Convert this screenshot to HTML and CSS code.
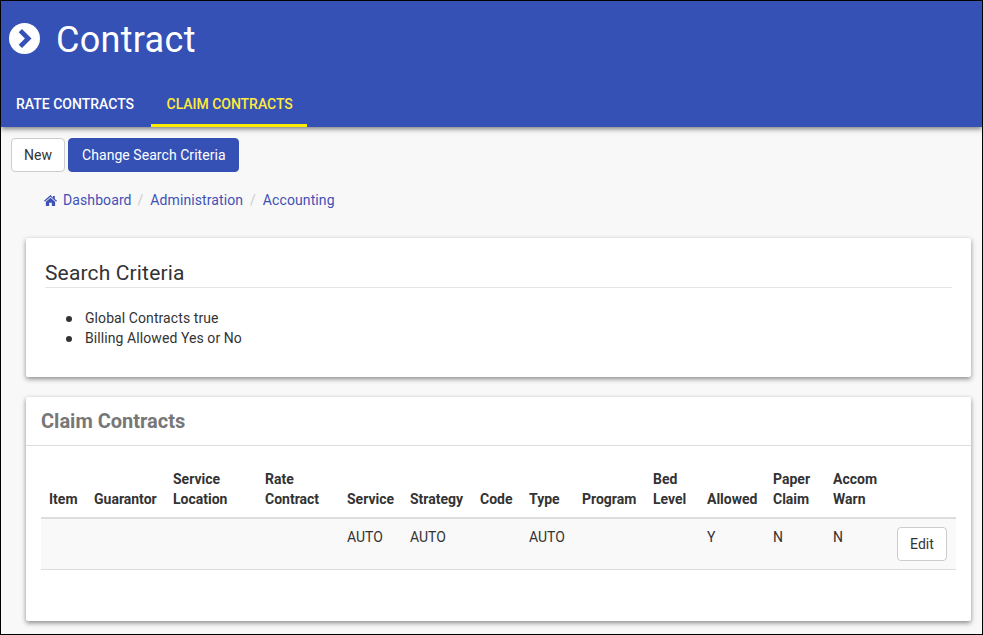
FILE: index.html
```html
<!DOCTYPE html>
<html lang="en">
<head>
<meta charset="utf-8">
<title>Contract</title>
<link rel="stylesheet" href="styles.css">
</head>
<body>
<div class="frame">
  <header class="header">
    <div class="title-row">
      <svg class="title-icon" viewBox="0 0 31 31" width="31" height="31" aria-hidden="true">
        <circle cx="15.500" cy="15.500" r="15.500" fill="#fff"/>
        <path d="M13 6 22.500 15.500 13 25 9.700 21.700l6.200-6.200-6.200-6.200z" fill="#3551b5"/>
      </svg>
      <h1 class="title">Contract</h1>
    </div>
    <nav class="tabs">
      <a class="tab">RATE CONTRACTS</a>
      <a class="tab tab-active">CLAIM CONTRACTS</a>
    </nav>
  </header>
  <main class="main">
    <div class="actions">
      <button class="btn btn-default">New</button>
      <button class="btn btn-primary">Change Search Criteria</button>
    </div>
    <ol class="breadcrumb">
      <li class="crumb">
        <svg class="home" viewBox="0 0 24 20" width="13" height="11" aria-hidden="true">
          <path d="M12 0 0 10.500l1.500 1.700L12 3l10.500 9.200 1.500-1.700-4-3.500V1.500h-3.500v3.300zM12 5 3.500 12.400V20h6v-6h5v6h6v-7.600z" fill="#3f51b5"/>
        </svg>
        <a>Dashboard</a>
      </li>
      <li class="crumb"><a>Administration</a></li>
      <li class="crumb"><a>Accounting</a></li>
    </ol>
    <section class="card card-search">
      <h2 class="search-title">Search Criteria</h2>
      <ul class="criteria">
        <li>Global Contracts true</li>
        <li>Billing Allowed Yes or No</li>
      </ul>
    </section>
    <section class="card card-table">
      <h3 class="panel-title">Claim Contracts</h3>
      <div class="panel-body">
        <table class="grid">
          <thead>
            <tr>
              <th>Item</th><th>Guarantor</th><th>Service<br>Location</th><th>Rate<br>Contract</th><th>Service</th><th>Strategy</th><th>Code</th><th>Type</th><th>Program</th><th>Bed<br>Level</th><th>Allowed</th><th>Paper<br>Claim</th><th>Accom<br>Warn</th><th></th>
            </tr>
          </thead>
          <tbody>
            <tr>
              <td></td><td></td><td></td><td></td><td>AUTO</td><td>AUTO</td><td></td><td>AUTO</td><td></td><td></td><td>Y</td><td>N</td><td>N</td><td class="cell-action"><button class="btn btn-default btn-edit">Edit</button></td>
            </tr>
          </tbody>
        </table>
      </div>
    </section>
  </main>
</div>
</body>
</html>
```

FILE: styles.css
```css
* { box-sizing: border-box; }
html, body { margin: 0; padding: 0; height: 100%; }
body {
  font-family: Roboto, "Liberation Sans", sans-serif;
  font-size: 14px;
  line-height: 20px;
  color: #333;
  background: #f8f8f8;
  overflow: hidden;
}
.frame {
  width: 983px;
  height: 635px;
  border: 1px solid #000;
  overflow: hidden;
}
.header {
  height: 126px;
  background: #3551b5;
  box-shadow: 0 2px 5px rgba(0,0,0,.5);
  position: relative;
  display: flex;
  flex-direction: column;
  justify-content: space-between;
}
.title-row {
  display: flex;
  align-items: flex-start;
  padding: 22px 0 0 8px;
}
.title-icon { flex: none; }
.title {
  margin: 1px 0 0 16px;
  font-size: 36px;
  line-height: 32px;
  font-weight: 400;
  letter-spacing: 0.3px;
  color: #fff;
}
.tabs { display: flex; }
.tab {
  display: block;
  height: 46px;
  padding: 13px 15px 0;
  margin-right: 2px;
  color: #fff;
  font-size: 14px;
  font-weight: 500;
}
.tab-active {
  color: #ffeb3b;
  border-bottom: 3px solid #ffeb00;
  padding: 13px 14px 0 15.500px;
  letter-spacing: -0.03px;
}
.main { padding: 11px 11px 0 10px; }
.actions { display: flex; gap: 3px; }
.btn {
  font-family: inherit;
  font-size: 14px;
  line-height: 20px;
  height: 34px;
  border-radius: 4px;
  padding: 6px 12px;
  cursor: pointer;
  letter-spacing: 0.05px;
}
.btn-default { background: #fff; border: 1px solid #ccc; color: #333; }
.btn-primary { background: #3551b5; border: 1px solid #3551b5; color: #fff; padding: 6px 12px 6px 13px; }
.breadcrumb {
  list-style: none;
  display: flex;
  margin: 18px 0 0;
  padding: 0 0 0 33px;
  height: 20px;
  letter-spacing: 0.1px;
}
.crumb { color: #3f51b5; display: flex; align-items: center; }
.crumb + .crumb::before {
  content: "/";
  color: #ccc;
  padding: 0 7px 0 5.800px;
}
.crumb + .crumb + .crumb::before { padding-left: 6.800px; }
.crumb a { color: #3f51b5; }
.home { margin-right: 6px; }
.card {
  background: #fff;
  border-radius: 2px;
  margin-left: 15px;
  width: 945px;
  box-shadow: 0 2px 5px rgba(0,0,0,.45);
}
.card-search {
  height: 139px;
  margin-top: 28px;
  padding: 22px 19px 0;
}
.search-title {
  margin: 0;
  height: 28px;
  font-size: 21px;
  line-height: 26px;
  font-weight: 400;
  letter-spacing: 0.15px;
  color: #333;
  border-bottom: 1px solid #e5e5e5;
}
.criteria {
  list-style: none;
  margin: 20px 0 0;
  padding: 0 0 0 40px;
  letter-spacing: 0.08px;
}
.criteria li::before {
  content: "";
  display: inline-block;
  width: 6px;
  height: 6px;
  border-radius: 50%;
  background: #333;
  margin: 0 13px 1px -19px;
  vertical-align: middle;
}
.card-table { height: 224px; margin-top: 20px; }
.panel-title {
  margin: 0;
  height: 49px;
  padding: 13px 15px 0;
  font-size: 20px;
  line-height: 22px;
  font-weight: 700;
  color: #777;
  border-bottom: 1px solid #ddd;
}
.panel-body { padding: 15px 15px 0; }
.grid {
  border-collapse: collapse;
  table-layout: fixed;
  width: 915px;
}
.grid th {
  padding: 8px;
  text-align: left;
  vertical-align: bottom;
  font-weight: 700;
  color: #333;
  border-bottom: 2px solid #ddd;
}
.grid td {
  padding: 8px;
  vertical-align: top;
  background: #f9f9f9;
  border-bottom: 1px solid #ddd;
}
.grid th:nth-child(1) { width: 45px; }
.grid th:nth-child(2) { width: 79px; }
.grid th:nth-child(3) { width: 92px; }
.grid th:nth-child(4) { width: 82px; }
.grid th:nth-child(5) { width: 63px; }
.grid th:nth-child(6) { width: 70px; }
.grid th:nth-child(7) { width: 49px; }
.grid th:nth-child(8) { width: 53px; }
.grid th:nth-child(9) { width: 71px; }
.grid th:nth-child(10) { width: 54px; }
.grid th:nth-child(11) { width: 66px; }
.grid th:nth-child(12) { width: 60px; }
.grid th:nth-child(13) { width: 64px; }
.grid th:nth-child(14) { width: 67px; }
.cell-action { text-align: right; }
.grid td.cell-action { padding: 8px 9px 8px 0; }
.btn-edit { width: 50px; padding: 6px 0; }
```
